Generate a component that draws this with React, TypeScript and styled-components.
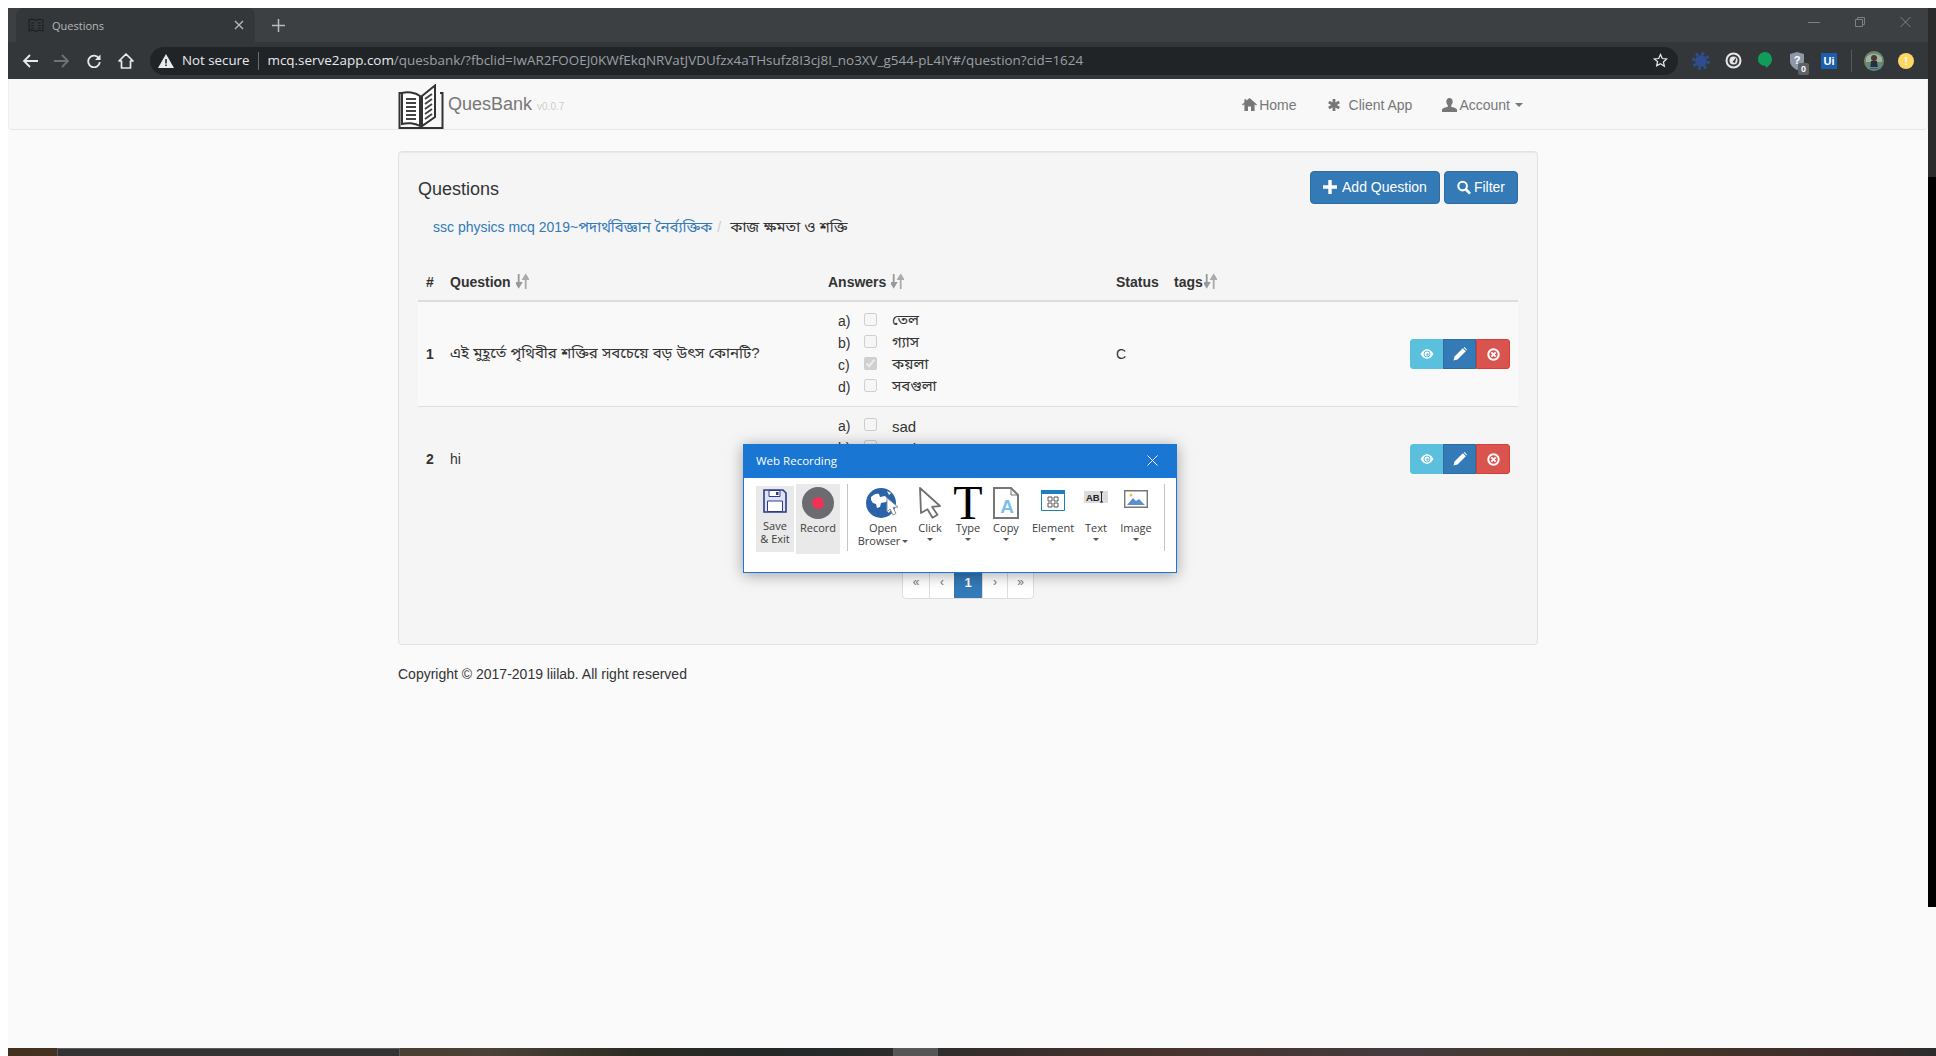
import React from 'react';
import styled, { createGlobalStyle } from 'styled-components';

const SANS = '"Liberation Sans", "Noto Sans Bengali", "Lohit Bengali", "Noto Sans", sans-serif';
const UI = '"Open Sans", "Noto Sans", sans-serif';

const GlobalStyle = createGlobalStyle`
    html, body {
        margin: 0;
        padding: 0;
        background: #ffffff;
        overflow: hidden;
    }
    * { box-sizing: border-box; }
`;

const Screen = styled.div`
    width: 1936px;
    height: 1056px;
    padding-top: 8px;
    display: flex;
    flex-direction: column;
    overflow: hidden;
    position: relative;
`;

const Desktop = styled.div`
    flex: 1;
    min-height: 0;
    display: flex;
    padding-left: 8px;
`;

const BrowserWindow = styled.div`
    width: 1920px;
    display: flex;
    flex-direction: column;
    background: #fafafa;
`;

const WindowEdge = styled.div`
    width: 8px;
    display: flex;
    flex-direction: column;
    background: #fafafa;
`;

const EdgePart = styled.div<{ $h: number; $color: string }>`
    height: ${({ $h }) => $h}px;
    background: ${({ $color }) => $color};
`;

/* browser chrome */
const TabStrip = styled.div`
    height: 34px;
    background: #3c4043;
    display: flex;
    align-items: stretch;
    font-family: ${UI};
`;

const Tab = styled.div`
    width: 239px;
    margin-left: 8px;
    background: #33373a;
    border-radius: 8px 8px 0 0;
    display: flex;
    align-items: center;
    padding: 0 11px 0 12px;
    color: #b5b8bb;
    font-size: 11px;
`;

const TabTitle = styled.span`
    flex: 1;
    margin-left: 8px;
`;

const NewTab = styled.div`
    margin-left: 17px;
    display: flex;
    align-items: center;
    color: #b8babc;
`;

const WindowControls = styled.div`
    margin-left: auto;
    display: flex;
    align-items: flex-start;
    padding: 9px 17px 0 0;
    gap: 35px;
    color: #7d8083;
`;

const Toolbar = styled.div`
    height: 37px;
    background: #33373a;
    display: flex;
    align-items: center;
    padding-left: 6px;
    font-family: ${UI};
`;

const NavIcon = styled.div`
    width: 32px;
    height: 28px;
    display: flex;
    align-items: center;
    justify-content: center;
`;

const Omnibox = styled.div`
    flex: 1;
    height: 28px;
    margin-left: 8px;
    background: #212427;
    border-radius: 14px;
    display: flex;
    align-items: center;
    padding: 0 10px 0 8px;
    color: #e8eaed;
    white-space: nowrap;
`;

const NotSecure = styled.span`
    margin: -2px 0 0 8px;
    font-size: 13.3px;
`;

const OmniDivider = styled.span`
    width: 1px;
    height: 18px;
    background: #6a6d70;
    margin: 0 8px 0 9px;
`;

const Url = styled.span`
    flex: 1;
    margin-top: -2px;
    font-size: 13.45px;
    color: #9aa0a6;
`;

const Host = styled.span`
    color: #e8eaed;
`;

const ExtTray = styled.div`
    width: 250px;
    padding-left: 7px;
    display: flex;
    align-items: center;
`;

const ExtSlot = styled.div`
    position: relative;
    width: 32px;
    height: 28px;
    display: flex;
    align-items: center;
    justify-content: center;
`;

const ExtBadge = styled.span`
    position: absolute;
    left: 17px;
    top: 16px;
    width: 11px;
    height: 12px;
    background: #5f6368;
    border-radius: 2px;
    color: #ffffff;
    font: bold 9px/12px ${SANS};
    text-align: center;
`;

const UiChip = styled.span`
    width: 16px;
    height: 16px;
    background: #1b5fae;
    color: #ffffff;
    font: bold 11px/16px ${SANS};
    text-align: center;
`;

const WarnDot = styled.span`
    width: 16px;
    height: 16px;
    border-radius: 50%;
    background: #fdd663;
    color: #ffffff;
    font: bold 11px/16px ${SANS};
    text-align: center;
`;

const ExtDivider = styled.span`
    width: 1px;
    height: 22px;
    background: #55595c;
    margin: 0 6px;
`;

/* page */
const Navbar = styled.div`
    height: 51px;
    background: #f8f8f8;
    border-bottom: 1px solid #e7e7e7;
    border-left: 1px solid #eeeeee;
    border-right: 1px solid #eeeeee;
    border-radius: 0 0 4px 4px;
`;

const Container = styled.div`
    width: 1140px;
    margin: 0 auto;
    font-family: ${SANS};
    color: #333333;
    font-size: 14px;
`;

const NavInner = styled(Container)`
    height: 50px;
    display: flex;
    align-items: center;
`;

const Logo = styled.svg`
    width: 46px;
    height: 46px;
    align-self: flex-start;
    margin-top: 5px;
`;

const BrandName = styled.span`
    margin-left: 4px;
    font-size: 18px;
    color: #777777;
`;

const Version = styled.small`
    margin-left: 5px;
    margin-top: 5px;
    font-size: 10px;
    color: #cccccc;
`;

const NavLinks = styled.div`
    margin: 1px 15px 0 auto;
    display: flex;
    align-items: center;
`;

const NavLink = styled.a<{ $gap: number; $ml?: number }>`
    display: flex;
    align-items: center;
    gap: ${({ $gap }) => $gap}px;
    margin-left: ${({ $ml }) => $ml ?? 0}px;
    color: #777777;
    font-size: 14px;
`;

const Caret = styled.span`
    width: 0;
    height: 0;
    margin-left: 3px;
    border-top: 4px solid #777777;
    border-left: 4px solid transparent;
    border-right: 4px solid transparent;
`;

const Well = styled.div`
    margin-top: 21px;
    padding: 19px;
    background: #f5f5f5;
    border: 1px solid #e3e3e3;
    border-radius: 4px;
    box-shadow: inset 0 1px 1px rgba(0, 0, 0, 0.05);
`;

const WellHeader = styled.div`
    display: flex;
    align-items: flex-start;
    height: 34px;
`;

const Title = styled.h4`
    margin: 8px 0 0;
    font-size: 18px;
    line-height: 20px;
    font-weight: 400;
    flex: 1;
`;

const Button = styled.button<{ $gap: number }>`
    height: 33px;
    margin-left: 4px;
    padding: 0 12px 1px;
    background: #337ab7;
    border: 1px solid #2e6da4;
    border-radius: 4px;
    color: #ffffff;
    font: 14px ${SANS};
    display: flex;
    align-items: center;
    gap: ${({ $gap }) => $gap}px;
`;

const Breadcrumb = styled.div`
    padding: 12px 15px 8px;
    margin-bottom: 18px;
    height: 40px;
    line-height: 20px;
    display: flex;
`;

const Crumb = styled.a`
    color: #337ab7;
`;

const CrumbSep = styled.span`
    color: #cccccc;
    padding: 0 5px;
`;

const Bn = styled.span`
    font-size: 15px;
`;

const Table = styled.table`
    width: 100%;
    table-layout: fixed;
    border-collapse: collapse;

    tbody tr + tr td {
        border-top: 1px solid #dddddd;
    }
`;

const Col = styled.col<{ $w?: number }>`
    width: ${({ $w }) => ($w ? `${$w}px` : 'auto')};
`;

const Th = styled.th`
    padding: 8px;
    height: 38px;
    text-align: left;
    line-height: 20px;
    border-bottom: 2px solid #dddddd;
    white-space: nowrap;
`;

const SortIcon = styled.svg<{ $ml: number }>`
    width: 13px;
    height: 15px;
    margin-left: ${({ $ml }) => $ml}px;
    vertical-align: -2px;
`;

const Tr = styled.tr<{ $striped?: boolean }>`
    background: ${({ $striped }) => ($striped ? '#f9f9f9' : 'transparent')};
`;

const Td = styled.td<{ $bold?: boolean }>`
    padding: 8px;
    vertical-align: middle;
    font-weight: ${({ $bold }) => ($bold ? 700 : 400)};
`;

const ActionGroup = styled.div`
    display: flex;
    justify-content: flex-end;
`;

const ActionButton = styled.button<{ $bg: string; $border: string }>`
    width: 33px;
    height: 30px;
    padding: 0;
    background: ${({ $bg }) => $bg};
    border: 1px solid ${({ $border }) => $border};
    display: flex;
    align-items: center;
    justify-content: center;
    &:first-child { border-radius: 3px 0 0 3px; }
    &:last-child { border-radius: 0 3px 3px 0; width: 34px; }
`;

const AnswerList = styled.div`
    padding-left: 10px;
`;

const AnswerRow = styled.div`
    height: 22px;
    display: flex;
    align-items: center;
`;

const AnswerKey = styled.span`
    width: 26px;
`;

const AnswerCheck = styled.input`
    width: 13px;
    height: 13px;
    margin: -4px 15px 0 0;
`;

const Pagination = styled.ul`
    list-style: none;
    width: 132px;
    height: 34px;
    margin: 54px auto 26px;
    padding: 0;
    display: flex;
    background: #ffffff;
    border: 1px solid #dddddd;
    border-radius: 4px;
`;

const PageItem = styled.li<{ $w: number; $active?: boolean }>`
    width: ${({ $w }) => $w}px;
    border-left: ${({ $active }) => ($active ? '0' : '1px solid #dddddd')};
    background: ${({ $active }) => ($active ? '#337ab7' : 'transparent')};
    color: ${({ $active }) => ($active ? '#ffffff' : '#777777')};
    font-weight: ${({ $active }) => ($active ? 700 : 400)};
    font-size: ${({ $active }) => ($active ? 13 : 12)}px;
    display: flex;
    align-items: center;
    justify-content: center;
    &:first-child { border-left: 0; }
`;

const Footer = styled.p`
    margin: 19px 0 0;
    line-height: 20px;
    font-size: 14px;
`;

/* recorder popup */
const Recorder = styled.div`
    position: absolute;
    left: 743px;
    top: 444px;
    width: 434px;
    height: 129px;
    background: #ffffff;
    border: 1px solid #1976d2;
    box-shadow: 0 2px 14px rgba(0, 0, 0, 0.35);
    font-family: ${UI};
`;

const RecorderTitle = styled.div`
    height: 33px;
    background: #1976d2;
    color: #ffffff;
    font-size: 11.5px;
    display: flex;
    align-items: center;
    justify-content: space-between;
    padding: 0 18px 2px 12px;
`;

const Ribbon = styled.div`
    display: flex;
    align-items: flex-start;
    padding: 6px 0 0 12px;
`;

const RibbonItem = styled.div<{ $w: number; $active?: boolean; $top?: number; $left?: number; $h?: number }>`
    width: ${({ $w }) => $w}px;
    height: ${({ $h }) => ($h ? `${$h}px` : 'auto')};
    margin-top: ${({ $top }) => $top ?? 0}px;
    margin-left: ${({ $left }) => $left ?? 0}px;
    background: ${({ $active }) => ($active ? '#e9e9e9' : 'transparent')};
    display: flex;
    flex-direction: column;
    align-items: center;
    color: #3c3c3c;
    font-size: 11px;
    line-height: 13px;
    text-align: center;
`;

const RibbonIcon = styled.div<{ $pad?: number }>`
    height: ${({ $pad }) => 35 - ($pad ?? 0)}px;
    padding-top: 3px;
    display: flex;
    justify-content: center;
    align-items: flex-start;
`;

const RibbonLabel = styled.div`
    margin-top: 2px;
    white-space: nowrap;
`;

const RibbonCaret = styled.span<{ $inline?: boolean }>`
    display: inline-block;
    width: 0;
    height: 0;
    margin: ${({ $inline }) => ($inline ? '0 0 2px 2px' : '4px 0 0')};
    border-top: 3px solid #555555;
    border-left: 3px solid transparent;
    border-right: 3px solid transparent;
`;

const RibbonSep = styled.div<{ $ml: number; $mr: number }>`
    width: 1px;
    height: 67px;
    background: #c4c4c4;
    margin: 0 ${({ $mr }) => $mr}px 0 ${({ $ml }) => $ml}px;
`;

const TypeGlyph = styled.span`
    font: 48px/32px "Liberation Serif", serif;
    color: #000000;
    height: 32px;
    overflow: visible;
`;

const RibbonSvg = styled.svg`
    margin-top: 3px;
`;

/* taskbar */
const Taskbar = styled.div`
    height: 8px;
    margin-left: 8px;
    display: flex;
    overflow: hidden;
    background: linear-gradient(
        90deg,
        #43301f 0,
        #4a4236 25%,
        #2a2a22 33%,
        #232828 40%,
        #2b2b2b 46%,
        #47332e 60%,
        #433b3e 72%,
        #433825 84%,
        #3e2c2c 95%,
        #2c2c2c 100%
    );
    font-family: ${UI};
`;

const TaskButton = styled.div<{ $ml: number; $w: number; $bg: string }>`
    margin-left: ${({ $ml }) => $ml}px;
    width: ${({ $w }) => $w}px;
    background: ${({ $bg }) => $bg};
    border: 1px solid #5a5a5a;
    border-bottom: 0;
`;

const Clock = styled.div`
    margin-left: 877px;
    padding-top: 5px;
    color: #ffffff;
    font-size: 11.5px;
    line-height: 16px;
`;

const Glyph = {
    Plus: () => (
        <svg width="14" height="14" viewBox="0 0 14 14"><path d="M5.3 0h3.4v5.3H14v3.4H8.7V14H5.3V8.7H0V5.3h5.3z" fill="#fff" /></svg>
    ),
    Search: () => (
        <svg width="14" height="15" viewBox="0 0 15 15"><circle cx="6" cy="6" r="4.6" fill="none" stroke="#fff" strokeWidth="2.2" /><path d="M9.4 9.4L14 14" stroke="#fff" strokeWidth="2.8" /></svg>
    ),
    Eye: () => (
        <svg width="14" height="12" viewBox="0 0 14 12"><path d="M0.5 6C3 2 5 1.2 7 1.2S11 2 13.5 6C11 10 9 10.8 7 10.8S3 10 0.5 6z" fill="#fff" /><circle cx="7" cy="6" r="3" fill="none" stroke="#5bc0de" strokeWidth="1" /><circle cx="7.5" cy="6.5" r="1.2" fill="#5bc0de" /></svg>
    ),
    Pencil: () => (
        <svg width="14" height="14" viewBox="0 0 14 14"><path d="M0.5 13.5l1-4L9.8 1.2l3 3L4.5 12.5zM10.6 0.5l0.9-0.4 2.4 2.4-0.4.9z" fill="#fff" /></svg>
    ),
    Remove: () => (
        <svg width="13" height="13" viewBox="0 0 13 13"><circle cx="6.5" cy="6.5" r="5.2" fill="none" stroke="#fff" strokeWidth="2" /><path d="M4.3 4.3l4.4 4.4M8.7 4.3L4.3 8.7" stroke="#fff" strokeWidth="1.8" /></svg>
    ),
    Home: () => (
        <svg width="15" height="13" viewBox="0 0 15 13"><path d="M7.5 0L15 6.6l-.9 1L12.6 6.3V13H9V8.6H6V13H2.4V6.3L.9 7.6 0 6.6 2.4 4.5V1.2h2v1.6z" fill="#777" /></svg>
    ),
    Asterisk: () => (
        <svg width="12" height="12" viewBox="0 0 12 12"><path d="M4.6 0h2.8v3.6l3.1-1.8 1.4 2.4L8.8 6l3.1 1.8-1.4 2.4-3.1-1.8V12H4.6V8.4l-3.1 1.8L.1 7.8 3.2 6 .1 4.2l1.4-2.4 3.1 1.8z" fill="#777" /></svg>
    ),
    User: () => (
        <svg width="15" height="14" viewBox="0 0 15 14"><path d="M7.5 0c2.1 0 3.2 1.5 3.2 3.6 0 1.6-.8 3-1.5 3.7v1.4c1.6.6 5.8 1.4 5.8 3V14H0v-2.3c0-1.6 4.2-2.4 5.8-3V7.3C5.1 6.6 4.3 5.2 4.3 3.6 4.3 1.5 5.4 0 7.5 0z" fill="#777" /></svg>
    ),
};

const Sort: React.FC<{ ml: number }> = ({ ml }) => (
    <SortIcon $ml={ml} viewBox="0 0 13 15">
        <path d="M2.7 0v11M0.3 9l2.4 4 2.4-4z" stroke="#999" strokeWidth="1.8" fill="#999" />
        <path d="M9.7 15V3M7.3 5l2.4-4 2.4 4z" stroke="#aaa" strokeWidth="1.8" fill="#aaa" />
    </SortIcon>
);

const BookLogo = () => (
    <Logo viewBox="0 0 46 46">
        <path d="M4 9H1.5v35h43V9H42" fill="none" stroke="#333" strokeWidth="2" />
        <path d="M22 12C17 8 9 7.5 4 9v31c5-1.5 13-1 18 2z" fill="#fff" stroke="#333" strokeWidth="2" />
        <path d="M24 12L37 1.5V33L24 42z" fill="#fff" stroke="#333" strokeWidth="2" />
        <path d="M8 15h10M8 19h10M8 23h10M8 27h10M8 31h10M8 35h10" stroke="#444" strokeWidth="2" />
        <path d="M27 15l7-5M27 20l7-5M27 25l7-5M27 30l7-5M27 35l7-5" stroke="#444" strokeWidth="2" />
    </Logo>
);

const Answer: React.FC<{ k: string; text: string; checked?: boolean }> = ({ k, text, checked }) => (
    <AnswerRow>
        <AnswerKey>{k})</AnswerKey>
        <AnswerCheck type="checkbox" disabled defaultChecked={checked} />
        <Bn>{text}</Bn>
    </AnswerRow>
);

const Actions = () => (
    <ActionGroup>
        <ActionButton $bg="#5bc0de" $border="#5bc0de"><Glyph.Eye /></ActionButton>
        <ActionButton $bg="#337ab7" $border="#2e6da4"><Glyph.Pencil /></ActionButton>
        <ActionButton $bg="#d9534f" $border="#d43f3a"><Glyph.Remove /></ActionButton>
    </ActionGroup>
);

const ChromeBar = () => (
    <>
        <TabStrip>
            <Tab>
                <svg width="16" height="14" viewBox="0 0 16 14"><path d="M1 2c2-1 5-1 6.5.5C9 1 12 1 15 2v11c-3-1-6-1-7.5.5C6 12 3 12 1 13z" fill="none" stroke="#1e2022" strokeWidth="1.2" /><path d="M3 5h3M3 7.5h3M3 10h3M10 5h3M10 7.5h3M10 10h3" stroke="#1e2022" /></svg>
                <TabTitle>Questions</TabTitle>
                <svg width="10" height="10" viewBox="0 0 10 10"><path d="M1 1l8 8M9 1l-8 8" stroke="#b8babc" strokeWidth="1.3" /></svg>
            </Tab>
            <NewTab>
                <svg width="13" height="13" viewBox="0 0 13 13"><path d="M6.5 0v13M0 6.5h13" stroke="#b8babc" strokeWidth="1.5" /></svg>
            </NewTab>
            <WindowControls>
                <svg width="12" height="10" viewBox="0 0 12 10"><path d="M0 5.5h12" stroke="currentColor" /></svg>
                <svg width="10" height="10" viewBox="0 0 10 10"><path d="M2.5 2.5V.5h7v7h-2M.5 2.5h7v7h-7z" fill="none" stroke="currentColor" /></svg>
                <svg width="11" height="10" viewBox="0 0 11 10"><path d="M.5 0l10 10M10.500 0l-10 10" stroke="currentColor" /></svg>
            </WindowControls>
        </TabStrip>
        <Toolbar>
            <NavIcon>
                <svg width="16" height="14" viewBox="0 0 16 14"><path d="M16 7H2M8 1L2 7l6 6" fill="none" stroke="#e8eaed" strokeWidth="1.8" /></svg>
            </NavIcon>
            <NavIcon>
                <svg width="16" height="14" viewBox="0 0 16 14"><path d="M0 7h14M8 1l6 6-6 6" fill="none" stroke="#6e7276" strokeWidth="1.8" /></svg>
            </NavIcon>
            <NavIcon>
                <svg width="14" height="14" viewBox="0 0 14 14"><path d="M12 4.5A5.8 5.8 0 1 0 12.8 8" fill="none" stroke="#e8eaed" strokeWidth="1.8" /><path d="M13.5 .5v5.5H8z" fill="#e8eaed" /></svg>
            </NavIcon>
            <NavIcon>
                <svg width="16" height="16" viewBox="0 0 16 16"><path d="M8 1L1 8h2.5v7h9V8H15z" fill="none" stroke="#e8eaed" strokeWidth="1.7" strokeLinejoin="round" /></svg>
            </NavIcon>
            <Omnibox>
                <svg width="16" height="14" viewBox="0 0 16 14"><path d="M8 0l8 14H0z" fill="#e8eaed" /><path d="M7.2 5h1.6v4.5H7.2zM7.2 10.500h1.6V12H7.2z" fill="#212427" /></svg>
                <NotSecure>Not secure</NotSecure>
                <OmniDivider />
                <Url>
                    <Host>mcq.serve2app.com</Host>/quesbank/?fbclid=IwAR2FOOEJ0KWfEkqNRVatJVDUfzx4aTHsufz8I3cj8I_no3XV_g544-pL4IY#/question?cid=1624
                </Url>
                <svg width="15" height="15" viewBox="0 0 24 24"><path d="M12 2.5l2.9 6.3 6.9.8-5.1 4.7 1.4 6.8L12 17.2 5.900 20.600l1.400-6.800L2.200 9.600l6.900-.8z" fill="none" stroke="#e8eaed" strokeWidth="2" /></svg>
            </Omnibox>
            <ExtTray>
                <ExtSlot>
                    <svg width="18" height="18" viewBox="0 0 18 18"><circle cx="9" cy="9" r="6" fill="#2f4d8a" /><circle cx="9" cy="9" r="7.5" fill="none" stroke="#2f4d8a" strokeWidth="3" strokeDasharray="3 2.9" /></svg>
                </ExtSlot>
                <ExtSlot>
                    <svg width="17" height="17" viewBox="0 0 17 17"><circle cx="8.5" cy="8.5" r="7" fill="#3a3d40" stroke="#e8e8e8" strokeWidth="2" /><circle cx="8.5" cy="8.5" r="4" fill="#e8e8e8" /><path d="M7.5 10l4-5-1.500 6z" fill="#333" /></svg>
                </ExtSlot>
                <ExtSlot>
                    <svg width="14" height="18" viewBox="0 0 14 18"><path d="M7 0c4 0 7 3 7 7.5 0 3.5-3 6.5-6 8.5v-2C3 14 0 11 0 7.5 0 3 3 0 7 0z" fill="#0f9d58" /></svg>
                </ExtSlot>
                <ExtSlot>
                    <svg width="14" height="18" viewBox="0 0 14 18"><path d="M7 0l7 2v7c0 4-3 7-7 9-4-2-7-5-7-9V2z" fill="#8e97a6" /><text x="7" y="12" textAnchor="middle" fontSize="11" fontWeight="700" fontFamily="Liberation Sans" fill="#fff">?</text></svg>
                    <ExtBadge>0</ExtBadge>
                </ExtSlot>
                <ExtSlot><UiChip>Ui</UiChip></ExtSlot>
                <ExtDivider />
                <ExtSlot>
                    <svg width="20" height="20" viewBox="0 0 20 20"><circle cx="10" cy="10" r="10" fill="#6c8a6a" /><path d="M2 7c3-5 12-6 16 0v4H2z" fill="#9fb2a5" /><circle cx="10" cy="7" r="3" fill="#4a3a32" /><path d="M6 18l1-8h6l1 8z" fill="#2c2e3a" /><path d="M3 16h14v1.5H3z" fill="#4f8bc9" /></svg>
                </ExtSlot>
                <ExtSlot><WarnDot>!</WarnDot></ExtSlot>
            </ExtTray>
        </Toolbar>
    </>
);

const RecorderPopup = () => (
    <Recorder>
        <RecorderTitle>
            Web Recording
            <svg width="11" height="11" viewBox="0 0 11 11"><path d="M.5.5l10 10M10.5.5l-10 10" stroke="#fff" /></svg>
        </RecorderTitle>
        <Ribbon>
            <RibbonItem $w={38} $active $top={2} $h={66}>
                <RibbonIcon $pad={4}>
                    <svg width="24" height="24" viewBox="0 0 24 24"><path d="M1 1h19l3 3v19H1z" fill="#dfe4f5" stroke="#2c3a8f" strokeWidth="1.6" /><path d="M6 1.5h11v6H6z" fill="#fff" stroke="#2c3a8f" /><path d="M13 3h2.5v3H13z" fill="#2c3a8f" /><path d="M4.5 12h15v10.5h-15z" fill="#fff" stroke="#2c3a8f" /></svg>
                </RibbonIcon>
                <RibbonLabel>Save<br />&amp; Exit</RibbonLabel>
            </RibbonItem>
            <RibbonItem $w={44} $active $h={70} $left={2}>
                <RibbonIcon>
                    <svg width="32" height="32" viewBox="0 0 32 32"><circle cx="16" cy="16" r="16" fill="#6c6c70" /><circle cx="16" cy="16" r="6" fill="#ef3355" /></svg>
                </RibbonIcon>
                <RibbonLabel>Record</RibbonLabel>
            </RibbonItem>
            <RibbonSep $ml={7} $mr={10} />
            <RibbonItem $w={50}>
                <RibbonIcon>
                    <svg width="34" height="32" viewBox="0 0 34 32"><circle cx="15" cy="16" r="15" fill="#2b62a8" /><path d="M5 10c3-3 6-4 8-3l1 3 5-1 3 3-2 3-5 1-1 4-3 1-1-4-3-1-2-3zM21 4l4 2-2 2zM22 21l3 1-2 4-2-2z" fill="#fff" /><path d="M21 11l11 9-5 .5 3 6-3 1.5-3-6-3 3z" fill="#fff" stroke="#8b9099" /></svg>
                </RibbonIcon>
                <RibbonLabel>Open<br />Browser<RibbonCaret $inline /></RibbonLabel>
            </RibbonItem>
            <RibbonItem $w={44}>
                <RibbonIcon>
                    <svg width="24" height="32" viewBox="0 0 24 32"><path d="M2 1l20 18-8 .8 5.5 8-5 3-5-8.5L3 26z" fill="#fff" stroke="#707070" strokeWidth="1.8" strokeLinejoin="round" /></svg>
                </RibbonIcon>
                <RibbonLabel>Click</RibbonLabel>
                <RibbonCaret />
            </RibbonItem>
            <RibbonItem $w={32}>
                <RibbonIcon><TypeGlyph>T</TypeGlyph></RibbonIcon>
                <RibbonLabel>Type</RibbonLabel>
                <RibbonCaret />
            </RibbonItem>
            <RibbonItem $w={44}>
                <RibbonIcon>
                    <svg width="26" height="32" viewBox="0 0 26 32"><path d="M1 1h17l7 7v23H1z" fill="#fff" stroke="#777" strokeWidth="2" /><path d="M18 1v7h7" fill="none" stroke="#777" /><text x="14" y="26" textAnchor="middle" fontSize="19" fontWeight="700" fontFamily="Liberation Sans" fill="#7cc0e8">A</text></svg>
                </RibbonIcon>
                <RibbonLabel>Copy</RibbonLabel>
                <RibbonCaret />
            </RibbonItem>
            <RibbonItem $w={50}>
                <RibbonIcon>
                    <RibbonSvg width="24" height="21" viewBox="0 0 24 21"><path d="M.5.5h23v20H.5z" fill="#fff" stroke="#1b7fc0" /><path d="M0 0h24v4H0z" fill="#1b7fc0" /><path d="M7 7h4v4H7zM13 7h4v4h-4zM7 13h4v4H7zM13 13h4v4h-4z" fill="none" stroke="#555" /></RibbonSvg>
                </RibbonIcon>
                <RibbonLabel>Element</RibbonLabel>
                <RibbonCaret />
            </RibbonItem>
            <RibbonItem $w={36}>
                <RibbonIcon>
                    <RibbonSvg width="24" height="14" viewBox="0 0 24 14"><path d="M0 1h24v12H0z" fill="#dcdcdc" /><text x="2" y="11" fontSize="9.5" fontWeight="700" fontFamily="Liberation Sans" fill="#222">AB</text><path d="M16 2h3M16 12h3M17.5 2v10" stroke="#222" /></RibbonSvg>
                </RibbonIcon>
                <RibbonLabel>Text</RibbonLabel>
                <RibbonCaret />
            </RibbonItem>
            <RibbonItem $w={44}>
                <RibbonIcon>
                    <RibbonSvg width="24" height="18" viewBox="0 0 24 18"><path d="M.7.7h22.6v16.6H.7z" fill="#fff" stroke="#777" strokeWidth="1.4" /><path d="M3 15l6-7 3 3 3-2 6 6z" fill="#5b8fd0" /><circle cx="7" cy="5" r="1.5" fill="#f0c24a" /></RibbonSvg>
                </RibbonIcon>
                <RibbonLabel>Image</RibbonLabel>
                <RibbonCaret />
            </RibbonItem>
            <RibbonSep $ml={6} $mr={0} />
        </Ribbon>
    </Recorder>
);

const App: React.FC = () => (
    <Screen>
        <GlobalStyle />
        <Desktop>
            <BrowserWindow>
                <ChromeBar />
                <Navbar>
                    <NavInner>
                        <BookLogo />
                        <BrandName>QuesBank</BrandName>
                        <Version>v0.0.7</Version>
                        <NavLinks>
                            <NavLink $gap={2}><Glyph.Home />Home</NavLink>
                            <NavLink $gap={9} $ml={31}><Glyph.Asterisk />Client App</NavLink>
                            <NavLink $gap={2} $ml={30}><Glyph.User />Account<Caret /></NavLink>
                        </NavLinks>
                    </NavInner>
                </Navbar>
                <Container>
                    <Well>
                        <WellHeader>
                            <Title>Questions</Title>
                            <Button $gap={5}><Glyph.Plus />Add Question</Button>
                            <Button $gap={3}><Glyph.Search />Filter</Button>
                        </WellHeader>
                        <Breadcrumb>
                            <Crumb>ssc physics mcq 2019~<Bn>পদার্থবিজ্ঞান নৈর্ব্যক্তিক</Bn></Crumb>
                            <CrumbSep>/</CrumbSep>
                            <Bn>&nbsp;কাজ ক্ষমতা ও শক্তি</Bn>
                        </Breadcrumb>
                        <Table>
                            <colgroup>
                                <Col $w={24} />
                                <Col $w={378} />
                                <Col $w={288} />
                                <Col $w={58} />
                                <Col $w={120} />
                                <Col />
                            </colgroup>
                            <thead>
                                <tr>
                                    <Th>#</Th>
                                    <Th>Question<Sort ml={5} /></Th>
                                    <Th>Answers<Sort ml={5} /></Th>
                                    <Th>Status</Th>
                                    <Th>tags<Sort ml={1} /></Th>
                                    <Th />
                                </tr>
                            </thead>
                            <tbody>
                                <Tr $striped>
                                    <Td $bold>1</Td>
                                    <Td><Bn>এই মুহূর্তে পৃথিবীর শক্তির সবচেয়ে বড় উৎস কোনটি?</Bn></Td>
                                    <Td>
                                        <AnswerList>
                                            <Answer k="a" text="তেল" />
                                            <Answer k="b" text="গ্যাস" />
                                            <Answer k="c" text="কয়লা" checked />
                                            <Answer k="d" text="সবগুলা" />
                                        </AnswerList>
                                    </Td>
                                    <Td>C</Td>
                                    <Td />
                                    <Td><Actions /></Td>
                                </Tr>
                                <Tr>
                                    <Td $bold>2</Td>
                                    <Td>hi</Td>
                                    <Td>
                                        <AnswerList>
                                            <Answer k="a" text="sad" />
                                            <Answer k="b" text="sad" />
                                            <Answer k="c" text="sad" />
                                            <Answer k="d" text="sad" />
                                        </AnswerList>
                                    </Td>
                                    <Td>A</Td>
                                    <Td />
                                    <Td><Actions /></Td>
                                </Tr>
                            </tbody>
                        </Table>
                        <Pagination>
                            <PageItem $w={26}>«</PageItem>
                            <PageItem $w={25}>‹</PageItem>
                            <PageItem $w={28} $active>1</PageItem>
                            <PageItem $w={25}>›</PageItem>
                            <PageItem $w={26}>»</PageItem>
                        </Pagination>
                    </Well>
                    <Footer>Copyright © 2017-2019 liilab. All right reserved</Footer>
                </Container>
            </BrowserWindow>
            <WindowEdge>
                <EdgePart $h={169} $color="#2b2b2b" />
                <EdgePart $h={730} $color="#000000" />
            </WindowEdge>
        </Desktop>
        <Taskbar>
            <TaskButton $ml={49} $w={343} $bg="#333333" />
            <TaskButton $ml={493} $w={45} $bg="#555555" />
            <Clock>10:57 AM</Clock>
        </Taskbar>
        <RecorderPopup />
    </Screen>
);

export default App;
